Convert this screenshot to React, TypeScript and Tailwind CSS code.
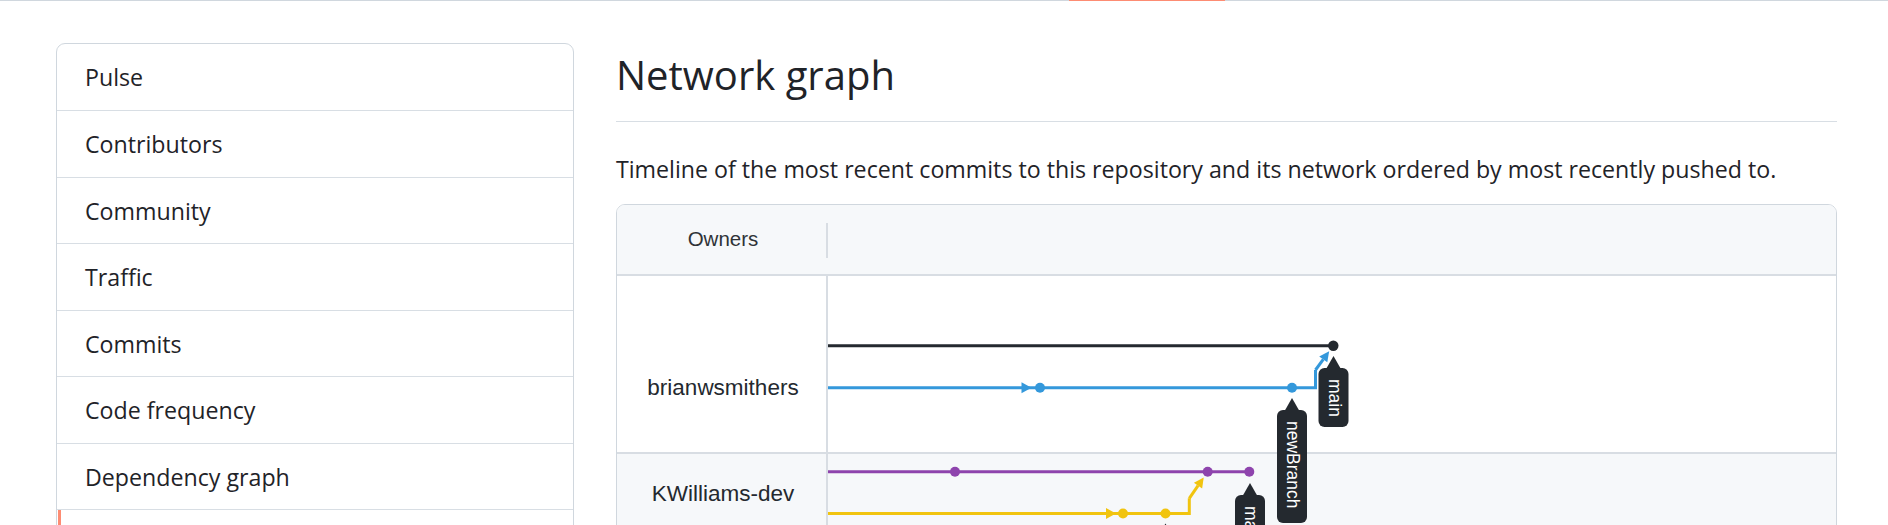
import React from "react";

type Item = { label: string; h: string; selected?: boolean };

const items: Item[] = [
  { label: "Pulse", h: "h-[66px]" },
  { label: "Contributors", h: "h-[67px]" },
  { label: "Community", h: "h-[66px]" },
  { label: "Traffic", h: "h-[67px]" },
  { label: "Commits", h: "h-[66px]" },
  { label: "Code frequency", h: "h-[67px]" },
  { label: "Dependency graph", h: "h-[66px]" },
  { label: "Network", h: "h-[67px]", selected: true },
  { label: "Forks", h: "h-[66px]" },
];

const COL = {
  black: "#24292f",
  blue: "#3498db",
  purple: "#8e44ad",
  yellow: "#f1c40f",
  label: "#24292f",
};

function mergeArrow(fromX: number, fromY: number, toX: number, toY: number, color: string) {
  const dx = toX - fromX;
  const dy = toY - fromY;
  const len = Math.sqrt(dx * dx + dy * dy);
  const ux = dx / len;
  const uy = dy / len;
  const tipX = toX - ux * 7;
  const tipY = toY - uy * 7;
  const bx = tipX - ux * 10;
  const by = tipY - uy * 10;
  const px = -uy * 5;
  const py = ux * 5;
  return (
    <g>
      <line x1={fromX} y1={fromY} x2={bx} y2={by} stroke={color} strokeWidth={3} />
      <polygon
        points={`${tipX},${tipY} ${bx + px},${by + py} ${bx - px},${by - py}`}
        fill={color}
      />
    </g>
  );
}

function RightArrow({ tip, y, color }: { tip: number; y: number; color: string }) {
  return <polygon points={`${tip},${y} ${tip - 10},${y - 5.5} ${tip - 10},${y + 5.5}`} fill={color} />;
}

function Label({ cx, apex, top, h, text }: { cx: number; apex: number; top: number; h: number; text: string }) {
  return (
    <g>
      <polygon points={`${cx - 8},${top + 2} ${cx + 8},${top + 2} ${cx},${apex}`} fill={COL.label} />
      <rect x={cx - 15} y={top} width={30} height={h} rx={6} fill={COL.label} />
      <text
        x={cx - 5}
        y={top + 11}
        transform={`rotate(90 ${cx - 5} ${top + 11})`}
        fill="#ffffff"
        fontSize={17.5}
        fontFamily="'Liberation Sans', Arial, sans-serif"
      >
        {text}
      </text>
    </g>
  );
}

function Graph() {
  return (
    <svg className="absolute inset-0 w-full h-full" xmlns="http://www.w3.org/2000/svg">
      <g transform="translate(-617 -276)">
        <line x1={828} y1={345.7} x2={1333} y2={345.7} stroke={COL.black} strokeWidth={3} />
        <path d="M828 387.7 H1315.5 V370" stroke={COL.blue} strokeWidth={3} fill="none" />
        {mergeArrow(1315.5, 370, 1333.3, 345.7, COL.blue)}
        <RightArrow tip={1031.5} y={387.7} color={COL.blue} />
        <circle cx={1040} cy={387.7} r={5} fill={COL.blue} />
        <circle cx={1292} cy={387.7} r={5} fill={COL.blue} />
        <circle cx={1333.3} cy={345.7} r={5.2} fill={COL.black} />
        <line x1={828} y1={471.7} x2={1249.3} y2={471.7} stroke={COL.purple} strokeWidth={3} />
        <circle cx={955} cy={471.7} r={5} fill={COL.purple} />
        <path d="M828 513.5 H1189.3 V498.3" stroke={COL.yellow} strokeWidth={3} fill="none" />
        {mergeArrow(1189.3, 498.3, 1207.7, 471.7, COL.yellow)}
        <RightArrow tip={1116} y={513.5} color={COL.yellow} />
        <circle cx={1123} cy={513.5} r={5} fill={COL.yellow} />
        <circle cx={1165.5} cy={513.5} r={5} fill={COL.yellow} />
        <circle cx={1207.7} cy={471.7} r={5} fill={COL.purple} />
        <circle cx={1249.3} cy={471.7} r={5} fill={COL.purple} />
        <Label cx={1333.5} apex={356} top={368} h={59} text="main" />
        <Label cx={1292} apex={398} top={410} h={113} text="newBranch" />
        <Label cx={1250} apex={483} top={495} h={59} text="main" />
        <Label cx={1165.5} apex={523.5} top={535.5} h={59} text="main" />
      </g>
    </svg>
  );
}

export default function App() {
  return (
    <div className="w-[1888px] h-[525px] overflow-hidden bg-white font-['Open_Sans',sans-serif] text-[#1f2328]">
      <div className="relative h-px bg-[#d0d7de]">
        <div className="absolute left-[1069px] top-0 h-px w-[156px] bg-[#fd8c73]" />
      </div>
      <div className="flex pt-[42px] pl-[56px]">
        <nav className="w-[518px] shrink-0 self-start border border-[#d0d7de] rounded-[9px] overflow-hidden">
          {items.map((it, i) => (
            <div
              key={it.label}
              className={`relative flex items-center pl-[28px] text-[23.2px] leading-[30px] ${it.h} ${
                i > 0 ? "border-t border-[#d8dee4]" : ""
              }`}
            >
              {it.selected && <div className="absolute left-[1px] top-0 bottom-0 w-[3px] bg-[#fd8c73]" />}
              {it.label}
            </div>
          ))}
        </nav>
        <main className="ml-[42px] w-[1221px] shrink-0">
          <div className="mt-[5px] pb-[19px] border-b border-[#d8dee4]">
            <h2 className="text-[40px] leading-[54px] font-normal">Network graph</h2>
          </div>
          <p className="mt-[32px] text-[23.2px] leading-[30px]">
            Timeline of the most recent commits to this repository and its network ordered by most recently pushed to.
          </p>
          <div className="mt-[20px] border border-[#d0d7de] rounded-[9px] overflow-hidden font-['Liberation_Sans',Arial,sans-serif]">
            <div className="h-[71px] flex bg-[#f6f8fa] border-b-2 border-[#d8dde3]">
              <div className="w-[209px] pl-[3px] flex items-center justify-center text-[20.5px] text-[#2f3337]">
                Owners
              </div>
              <div className="w-[2px] h-[35px] mt-[18px] bg-[#d8dde3]" />
            </div>
            <div className="relative h-[260px]">
              <div className="flex h-[178px] bg-white border-b-2 border-[#d8dde3]">
                <div className="w-[209px] pl-[3px] pt-[99px] text-center text-[22.5px] leading-[26px] text-[#24292f]">
                  brianwsmithers
                </div>
                <div className="w-[2px] bg-[#d8dde3]" />
                <div className="flex-1" />
              </div>
              <div className="flex h-[82px] bg-[#f6f8fa]">
                <div className="w-[209px] pl-[3px] pt-[27px] text-center text-[22.5px] leading-[26px] text-[#24292f]">
                  KWilliams-dev
                </div>
                <div className="w-[2px] bg-[#d8dde3]" />
                <div className="flex-1" />
              </div>
              <Graph />
            </div>
          </div>
        </main>
      </div>
    </div>
  );
}
